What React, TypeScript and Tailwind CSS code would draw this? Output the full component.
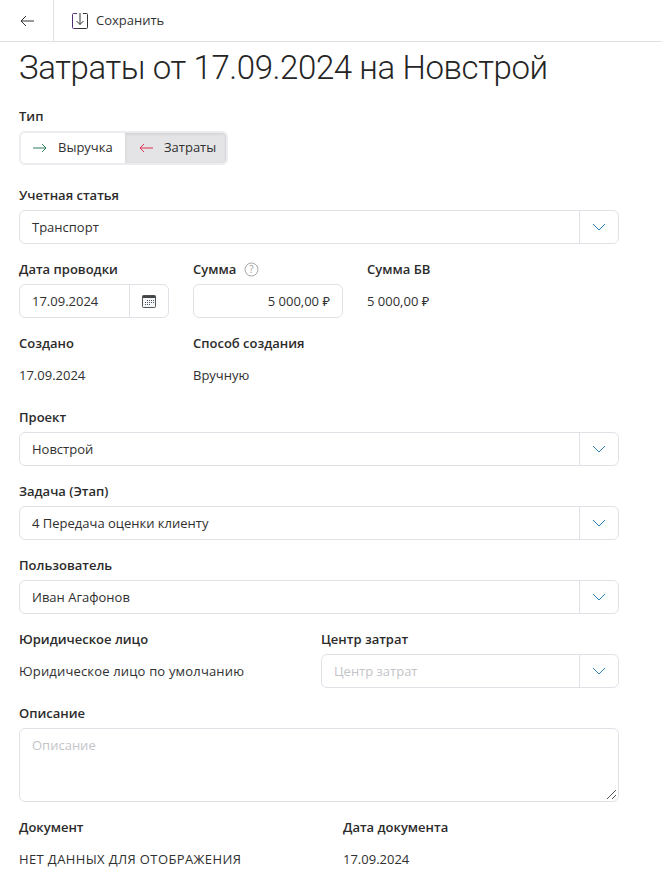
import React from 'react';

const font = "font-['Open_Sans','Noto_Sans',sans-serif]";

function Chevron() {
  return (
    <svg width="14" height="8" viewBox="0 0 14 8" fill="none" stroke="#2f7fb8" strokeWidth="1">
      <path d="M1 1l6 6 6-6" />
    </svg>
  );
}

function Label({ children }: { children: React.ReactNode }) {
  return <div className="h-[22px] mb-1 text-[13px] leading-[22px] font-semibold text-[#2b2b2b]">{children}</div>;
}

function Select({ value, placeholder }: { value?: string; placeholder?: string }) {
  return (
    <div className="flex h-[34px] bg-white border border-[#e1e1e8] rounded-md">
      <div className={`flex-1 pl-3 text-[13px] leading-[32px] ${value ? 'text-[#303030]' : 'text-[#c4c4c8]'}`}>
        {value || placeholder}
      </div>
      <div className="w-[39px] border-l border-[#e1e1e8] flex items-center justify-center">
        <Chevron />
      </div>
    </div>
  );
}

function SelectField({ label, value }: { label: string; value: string }) {
  return (
    <div className="mb-[14px]">
      <Label>{label}</Label>
      <Select value={value} />
    </div>
  );
}

function ReadOnly({ label, value, className, valueClass }: { label: string; value: string; className?: string; valueClass?: string }) {
  return (
    <div className={className}>
      <Label>{label}</Label>
      <div className={`h-[34px] text-[13px] leading-[34px] text-[#303030] whitespace-nowrap ${valueClass ?? ''}`}>{value}</div>
    </div>
  );
}

export default function App() {
  return (
    <div className={`w-[662px] h-[874px] overflow-hidden bg-white ${font}`}>
      {/* Toolbar */}
      <div className="flex h-[42px] border-b border-[#e2e2e2]">
        <div className="w-[54px] border-r border-[#e2e2e2] flex items-center justify-center">
          <svg width="14" height="12" viewBox="0 0 14 12" fill="none" stroke="#333" strokeWidth="1">
            <path d="M14 6H1M6 1L1 6l5 5" />
          </svg>
        </div>
        <div className="flex items-center pl-[18px] gap-2">
          <svg width="16" height="16" viewBox="0 0 16 16" fill="none">
            <path d="M5 0.500H1.500a1 1 0 0 0-1 1v13a1 1 0 0 0 1 1H5" stroke="#4f2f72" />
            <path d="M5 15.500h9.500a1 1 0 0 0 1-1v-13a1 1 0 0 0-1-1H11" stroke="#333" />
            <path d="M8 0v11.500M4.500 8L8 11.500 11.500 8" stroke="#333" />
          </svg>
          <span className="text-[13px] text-[#333]">Сохранить</span>
        </div>
      </div>

      <div className="pl-[19px] pr-[43px]">
        <h1 className="h-[63px] font-['Roboto',sans-serif] text-[33px] leading-[52px] tracking-[-0.4px] font-light text-[#252525] whitespace-nowrap">
          Затраты от 17.09.2024 на Новстрой
        </h1>

        {/* Type toggle */}
        <div className="mb-[19px]">
          <Label>Тип</Label>
          <div className="flex w-[209px] h-[34px] border-2 border-[#ececf0] rounded-md overflow-hidden text-[13px] text-[#303030]">
            <div className="flex-1 flex items-center pl-3 gap-[11px]">
              <svg width="14" height="10" viewBox="0 0 14 10" fill="none" stroke="#2e7d5b">
                <path d="M0 5h13M9 1l4 4-4 4" />
              </svg>
              Выручка
            </div>
            <div className="w-[101px] flex items-center pl-[14px] gap-[11px] bg-[#e4e4e6] shadow-[inset_0_1px_3px_rgba(0,0,0,0.1)]">
              <svg width="14" height="10" viewBox="0 0 14 10" fill="none" stroke="#d9304f">
                <path d="M14 5H1M5 1L1 5l4 4" />
              </svg>
              Затраты
            </div>
          </div>
        </div>

        <SelectField label="Учетная статья" value="Транспорт" />

        {/* Date and amounts */}
        <div className="flex mb-[14px]">
          <div className="w-[150px] mr-6">
            <Label>Дата проводки</Label>
            <div className="flex h-[34px] border border-[#e1e1e8] rounded-md">
              <div className="flex-1 pl-3 text-[13px] leading-[32px] text-[#303030]">17.09.2024</div>
              <div className="w-[39px] border-l border-[#e1e1e8] flex items-center justify-center">
                <svg width="14" height="13" viewBox="0 0 14 13" fill="none">
                  <rect x="0.500" y="0.500" width="13" height="12" rx="1" stroke="#555" fill="#f3f6fb" />
                  <rect x="0.500" y="0.500" width="13" height="2.500" fill="#444" />
                  <path d="M5 5.500h1M7 5.500h1M9 5.500h1M11 5.500h1M3 7.500h1M5 7.500h1M7 7.500h1M9 7.500h1M11 7.500h1M3 9.500h1M5 9.500h1M7 9.500h1" stroke="#555" />
                </svg>
              </div>
            </div>
          </div>
          <div className="w-[150px] mr-6">
            <div className="flex items-center gap-2 h-[22px] mb-1">
              <span className="text-[13px] leading-[22px] font-semibold text-[#2b2b2b]">Сумма</span>
              <svg width="15" height="15" viewBox="0 0 15 15" fill="none">
                <circle cx="7.500" cy="7.500" r="6.500" stroke="#a8a8a8" />
                <text x="7.500" y="11" textAnchor="middle" fontSize="10" fill="#a0a0a0">?</text>
              </svg>
            </div>
            <div className="h-[34px] border border-[#e1e1e8] rounded-md pr-3 text-right text-[13px] leading-[32px] text-[#303030]">
              5 000,00 ₽
            </div>
          </div>
          <ReadOnly label="Сумма БВ" value="5 000,00 ₽" />
        </div>

        {/* Created */}
        <div className="flex mb-[14px]">
          <ReadOnly label="Создано" value="17.09.2024" className="w-[174px]" />
          <ReadOnly label="Способ создания" value="Вручную" />
        </div>

        <SelectField label="Проект" value="Новстрой" />
        <SelectField label="Задача (Этап)" value="4 Передача оценки клиенту" />
        <SelectField label="Пользователь" value="Иван Агафонов" />

        <div className="flex mb-[14px]">
          <ReadOnly label="Юридическое лицо" value="Юридическое лицо по умолчанию" className="w-[302px]" valueClass="tracking-[0.17px]" />
          <div className="flex-1">
            <Label>Центр затрат</Label>
            <Select placeholder="Центр затрат" />
          </div>
        </div>

        <div className="mb-[14px]">
          <Label>Описание</Label>
          <div className="relative h-[74px] border border-[#e1e1e8] rounded-md pl-3 pt-[7px] text-[13px] text-[#c4c4c8]">
            Описание
            <svg className="absolute right-[1px] bottom-[1px]" width="11" height="11" viewBox="0 0 11 11" stroke="#555" fill="none">
              <path d="M1 10l9-9M6 10l4-4" />
            </svg>
          </div>
        </div>

        <div className="flex">
          <ReadOnly label="Документ" value="НЕТ ДАННЫХ ДЛЯ ОТОБРАЖЕНИЯ" className="w-[324px]" valueClass="tracking-[0.38px]" />
          <ReadOnly label="Дата документа" value="17.09.2024" />
        </div>
      </div>
    </div>
  );
}
